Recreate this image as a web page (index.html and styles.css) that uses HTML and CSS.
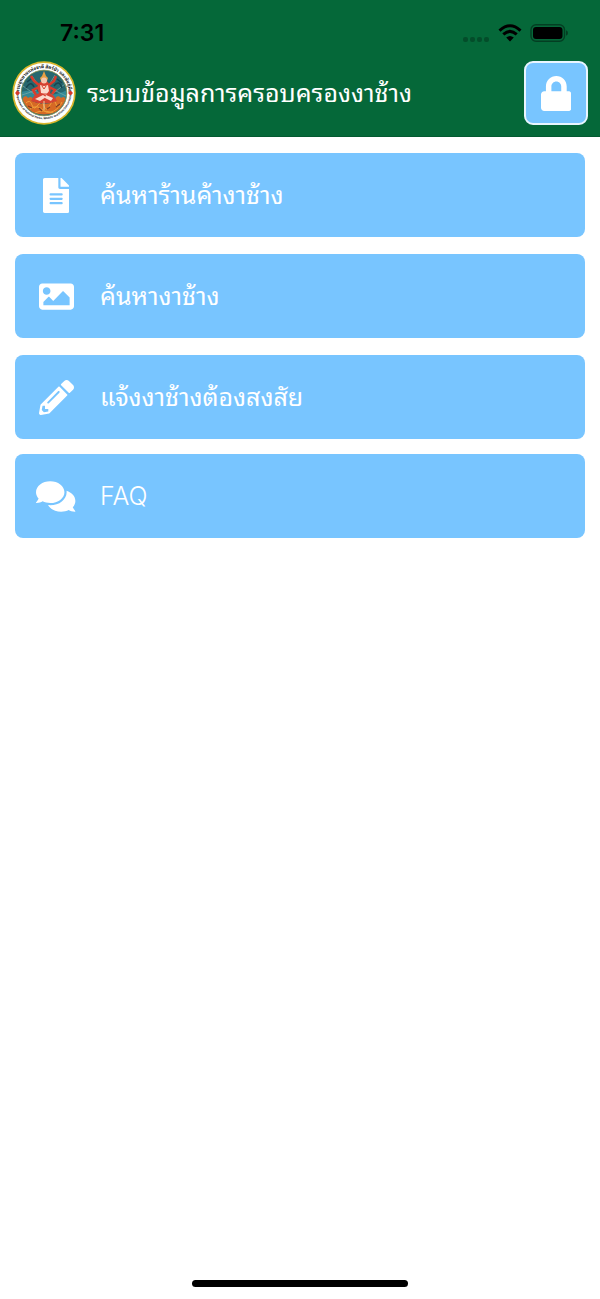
FILE: index.html
```html
<!DOCTYPE html>
<html lang="th">
<head>
<meta charset="utf-8">
<meta name="viewport" content="width=device-width, initial-scale=1">
<title>ระบบข้อมูลการครอบครองงาช้าง</title>
<link rel="stylesheet" href="styles.css">
</head>
<body>
<header class="header">
  <div class="status">
    <time class="clock">7:31</time>
    <div class="indicators">
      <svg class="dots" viewBox="0 0 28 6" aria-hidden="true"><rect x="1" y="1" width="5" height="5" rx="2"/><rect x="8" y="1" width="5" height="5" rx="2"/><rect x="15" y="1" width="5" height="5" rx="2"/><rect x="22" y="1" width="5" height="5" rx="2"/></svg>
      <svg class="wifi" viewBox="0 0 24 18" aria-hidden="true"><path d="M1.500 6.600Q12-3 22.500 6.600" /><path d="M5.300 10.400Q12 4.300 18.700 10.400"/><path class="wifi-tip" d="M8.200 13.600Q12 10.300 15.800 13.600L12 17.600Z"/></svg>
      <svg class="battery" viewBox="0 0 39 18" aria-hidden="true"><rect class="battery-case" x="1" y=".8" width="33.500" height="16.400" rx="5"/><rect x="3" y="3" width="29.500" height="12" rx="3"/><path class="battery-cap" d="M36 6.200q2 .8 2 2.800t-2 2.800z"/></svg>
    </div>
  </div>
  <div class="bar">
    <svg class="seal" viewBox="0 0 64 64" role="img" aria-label="กรมอุทยานแห่งชาติ สัตว์ป่า และพันธุ์พืช">
      <defs>
        <path id="arc-top" d="M75 350A247 247 0 1 1 565 350"/>
        <path id="arc-bottom" d="M46 330A275 275 0 0 0 594 330"/>
        <clipPath id="disc"><circle cx="32" cy="32" r="22.300"/></clipPath>
      </defs>
      <circle cx="32" cy="32" r="31.700" fill="#d9b62c"/>
      <circle cx="32" cy="32" r="30" fill="#fff"/>
      <circle cx="32" cy="32" r="23" fill="#27676f"/>
      <g clip-path="url(#disc)">
        <path d="M9 31Q20 28 31 32T55 29V38Q32 43 9 38Z" fill="#338996"/>
        <path d="M11 25L25 35M53 23L39 34M10 34L25 29M54 35L40 28M20 15L27 25M43 14L37 24" fill="none" stroke="#75a6a4" stroke-width=".8"/>
        <path d="M14 27Q19 19 22 26M42 25Q47 18 50 27M15 21L19 18M45 18L50 22" fill="none" stroke="#174650" stroke-width="1.500"/>
        <path d="M11 42C9 36 14 33 16 37C20 34 22 38 20 40Q32 46 44 40C42 35 47 34 49 37C53 34 55 39 52 43L48 49Q32 58 16 49Z" fill="#d66925"/>
        <path d="M14 42Q18 38 20 44T26 44T32 45T38 44T44 43T50 41M18 48Q25 43 31 49T46 47M23 52Q31 48 41 52" fill="none" stroke="#f0a03b" stroke-width="1"/>
        <path d="M16 45L20 47M27 47L30 50M35 48L38 46M44 46L48 43" stroke="#7d3d23" stroke-width="1.200"/>
        <path d="M32 10L34 15L36 17L35 20H29L28 17L30 15Z" fill="#e9a044"/>
        <path d="M27 24L22 20L19 15M37 24L42 20L44 15M27 26L21 29L24 34M37 26L43 29L40 33" fill="none" stroke="#d93c2b" stroke-width="2.500"/>
        <path d="M28 21Q32 18 36 21L39 27L38 32L42 35L45 40Q32 45 19 40L22 35L27 32L25 27Z" fill="#d64231"/>
        <circle cx="32" cy="19.500" r="3" fill="#f4c5ae"/>
        <path d="M28 24Q32 26 36 24L37 30L34 34L29 32ZM23 38L31 34L34 36L28 40ZM34 34L41 37L39 40L33 37Z" fill="#fbdccd"/>
        <path d="M30 25L32 28L34 25M28 33H36" fill="none" stroke="#d64231" stroke-width="1"/>
        <path d="M32 40V49" stroke="#e3d1a0" stroke-width="1"/>
      </g>
      <circle cx="32" cy="32" r="22.800" fill="none" stroke="#8f9a55" stroke-width=".8"/>
      <svg width="64" height="64" viewBox="0 0 640 640">
        <text class="seal-thai"><textPath href="#arc-top" startOffset="50%">กรมอุทยานแห่งชาติ สัตว์ป่า และพันธุ์พืช</textPath></text>
        <text class="seal-english"><textPath href="#arc-bottom" startOffset="50%">Department of National Parks, Wildlife and Plant Conservation</textPath></text>
      </svg>
      <path d="M5.500 30v4M3.500 32h4M58.500 30v4M56.500 32h4" stroke="#d5392b" stroke-width="2.200"/>
    </svg>
    <h1 class="title">ระบบข้อมูลการครอบครองงาช้าง</h1>
    <button class="lock" type="button" aria-label="เข้าสู่ระบบ">
      <svg class="icon" viewBox="0 0 448 512" aria-hidden="true"><path d="M400 224h-24v-72C376 68.200 307.800 0 224 0S72 68.200 72 152v72H48c-26.500 0-48 21.500-48 48v192c0 26.500 21.500 48 48 48h352c26.500 0 48-21.500 48-48V272c0-26.500-21.500-48-48-48zm-104 0H152v-72c0-39.700 32.300-72 72-72s72 32.300 72 72v72z"/></svg>
    </button>
  </div>
</header>
<main class="menu">
  <button class="item" type="button">
    <span class="item-icon"><svg class="icon" viewBox="0 0 384 512" aria-hidden="true"><path d="M224 136V0H24C10.700 0 0 10.700 0 24v464c0 13.300 10.700 24 24 24h336c13.300 0 24-10.700 24-24V160H248c-13.200 0-24-10.800-24-24zm64 236c0 6.600-5.400 12-12 12H108c-6.600 0-12-5.400-12-12v-8c0-6.600 5.400-12 12-12h168c6.600 0 12 5.400 12 12v8zm0-64c0 6.600-5.400 12-12 12H108c-6.600 0-12-5.400-12-12v-8c0-6.600 5.400-12 12-12h168c6.600 0 12 5.400 12 12v8zm0-72v8c0 6.600-5.400 12-12 12H108c-6.600 0-12-5.400-12-12v-8c0-6.600 5.400-12 12-12h168c6.600 0 12 5.400 12 12zm96-114.100v6.100H256V0h6.100c6.400 0 12.500 2.500 17 7l97.900 98c4.500 4.500 7 10.600 7 16.900z"/></svg></span>
    <span class="label">ค้นหาร้านค้างาช้าง</span>
  </button>
  <button class="item" type="button">
    <span class="item-icon"><svg class="icon" viewBox="0 0 512 512" aria-hidden="true"><path d="M464 448H48c-26.510 0-48-21.490-48-48V112c0-26.510 21.490-48 48-48h416c26.510 0 48 21.490 48 48v288c0 26.510-21.490 48-48 48zM112 120c-30.928 0-56 25.072-56 56s25.072 56 56 56 56-25.072 56-56-25.072-56-56-56zM64 384h384V272l-87.515-87.515c-4.686-4.686-12.284-4.686-16.971 0L208 320l-55.515-55.515c-4.686-4.686-12.284-4.686-16.971 0L64 336v48z"/></svg></span>
    <span class="label">ค้นหางาช้าง</span>
  </button>
  <button class="item" type="button">
    <span class="item-icon"><svg class="icon" viewBox="0 0 512 512" aria-hidden="true"><path d="M497.900 142.100l-46.100 46.100c-4.700 4.700-12.300 4.700-17 0l-111-111c-4.700-4.700-4.700-12.300 0-17l46.100-46.100c18.700-18.700 49.100-18.700 67.900 0l60.100 60.100c18.800 18.700 18.800 49.100 0 67.900zM284.200 99.800L21.600 362.400.4 483.900c-2.900 16.400 11.400 30.600 27.800 27.800l121.500-21.300 262.600-262.600c4.700-4.700 4.700-12.300 0-17l-111-111c-4.800-4.700-12.400-4.700-17.100 0zM124.100 339.900c-5.500-5.500-5.500-14.300 0-19.800l154-154c5.500-5.500 14.300-5.500 19.800 0s5.500 14.300 0 19.800l-154 154c-5.500 5.500-14.300 5.500-19.800 0zM88 424h48v36.300l-64.500 11.300-31.100-31.100L51.700 376H88v48z"/></svg></span>
    <span class="label">แจ้งงาช้างต้องสงสัย</span>
  </button>
  <button class="item item-compact" type="button">
    <span class="item-icon"><svg class="icon" viewBox="0 0 576 512" aria-hidden="true"><path d="M416 192c0-88.400-93.100-160-208-160S0 103.600 0 192c0 34.300 14.100 65.900 38 92-13.400 30.200-35.500 54.200-35.800 54.500-2.200 2.300-2.800 5.700-1.500 8.700S4.800 352 8 352c36.600 0 66.900-12.300 88.700-25 32.200 15.700 70.300 25 111.300 25 114.900 0 208-71.600 208-160zm122 220c23.900-26 38-57.700 38-92 0-66.900-53.500-124.200-129.300-148.100.9 6.600 1.300 13.300 1.300 20.100 0 105.900-107.700 192-240 192-10.800 0-21.300-.8-31.700-1.900C207.800 439.600 281.800 480 368 480c41 0 79.100-9.200 111.300-25 21.800 12.700 52.100 25 88.700 25 3.200 0 6.100-1.900 7.300-4.800 1.300-2.900.7-6.300-1.500-8.700-.3-.3-22.400-24.200-35.800-54.500z"/></svg></span>
    <span class="label label-latin">FAQ</span>
  </button>
</main>
<footer class="home"><div class="home-bar"></div></footer>
</body>
</html>
```
FILE: styles.css
```css
* { box-sizing: border-box; }

body {
  margin: 0;
  min-height: 100vh;
  display: flex;
  flex-direction: column;
  background: #fff;
  font-family: Inter, Thonburi, "Noto Sans Thai Looped", "Noto Looped Thai", Loma, Waree, Garuda, "Noto Sans Thai", "Noto Sans", sans-serif;
}

.header {
  background: #056839;
  padding-bottom: 11px;
  border-bottom: 1px solid #045a31;
}

.status {
  display: flex;
  align-items: flex-end;
  justify-content: space-between;
  height: 61px;
  padding: 0 31px 13px 60px;
}

.clock {
  font-size: 23px;
  line-height: 30px;
  font-weight: 600;
}

.indicators {
  display: flex;
  align-items: center;
  gap: 8px;
  height: 30px;
}

.dots { width: 28px; height: 6px; margin-top: 12px; opacity: .25; }
.wifi { width: 24px; height: 18px; fill: none; stroke: #000; stroke-width: 3; }
.wifi-tip { fill: #000; stroke: none; }
.battery { width: 39px; height: 18px; }
.battery-case { fill: none; stroke: #000; stroke-opacity: .4; stroke-width: 1.4; }
.battery-cap { fill-opacity: .4; }

.bar {
  display: flex;
  align-items: center;
  gap: 11px;
  padding: 0 12px;
}

.seal { flex: none; width: 64px; height: 64px; }
.seal-thai { font-size: 46px; font-weight: 700; text-anchor: middle; fill: #111; }
.seal-english { font-family: "Liberation Sans", sans-serif; font-size: 28px; font-weight: 700; text-anchor: middle; fill: #000; }

.title {
  flex: 1;
  margin: 0;
  color: #fff;
  font-size: 25px;
  line-height: 40px;
  font-weight: 400;
  white-space: nowrap;
}

.lock {
  flex: none;
  display: grid;
  place-items: center;
  width: 64px;
  height: 64px;
  padding: 0;
  background: #78c5ff;
  border: 2px solid #e9f5ff;
  border-radius: 9px;
}

.icon { display: block; height: 35px; fill: #fff; }

.menu {
  flex: 1;
  display: flex;
  flex-direction: column;
  gap: 17px;
  padding: 16px 15px;
}

.item {
  display: flex;
  align-items: center;
  gap: 24px;
  min-height: 84px;
  padding: 0 21px;
  background: #78c5ff;
  border: 0;
  border-radius: 8px;
  color: #fff;
  font: inherit;
  text-align: left;
}

.item-compact { margin-top: -2px; }

.item-icon { display: flex; justify-content: center; width: 40px; }

.label { font-size: 25px; line-height: 40px; font-weight: 400; }
.label-latin { font-weight: 300; }

.home { display: flex; justify-content: center; padding-bottom: 12px; }
.home-bar { width: 36%; height: 7px; border-radius: 4px; background: #000; }
```
